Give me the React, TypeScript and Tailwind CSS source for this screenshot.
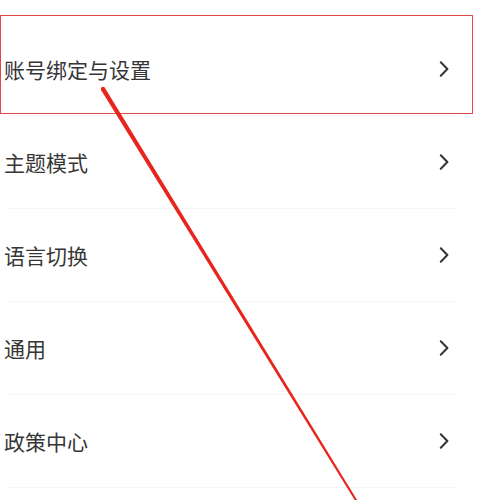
const items = ["账号绑定与设置", "主题模式", "语言切换", "通用", "政策中心"]

function Chevron() {
  return (
    <svg width="10" height="16" viewBox="0 0 10 16" fill="none" className="text-[#333333]">
      <polyline
        points="1.8,1.2 8.4,8 1.8,14.8"
        stroke="currentColor"
        strokeWidth="2"
        strokeLinecap="round"
        strokeLinejoin="round"
      />
    </svg>
  )
}

export default function App() {
  return (
    <div
      className="relative w-[477px] h-[500px] overflow-hidden bg-white"
      style={{ fontFamily: '"Noto Sans CJK SC", "Noto Sans", sans-serif' }}
    >
      <div className="pt-[23px]">
        {items.map((label, idx) => (
          <div key={idx}>
            <div className="flex h-[92px] items-center justify-between pl-[4px] pr-[28px]">
              <span className="text-[21px] leading-none text-[#363636]">{label}</span>
              <Chevron />
            </div>
            <div className="ml-[8px] mr-[22px] h-px bg-[#f5f5f5]" />
          </div>
        ))}
      </div>

      {/* annotation overlay */}
      <div className="absolute left-0 top-[15px] h-[99px] w-[473px] border-[1.5px] border-[#e04848]" />
      <svg className="absolute left-0 top-0" width="477" height="500" viewBox="0 0 477 500">
        <polygon points="101.2,90.2 104.8,87.8 357.4,500.5 355.6,501.5" fill="#e8251d" />
        <circle cx="103" cy="89" r="2.2" fill="#e8251d" />
      </svg>
    </div>
  )
}
